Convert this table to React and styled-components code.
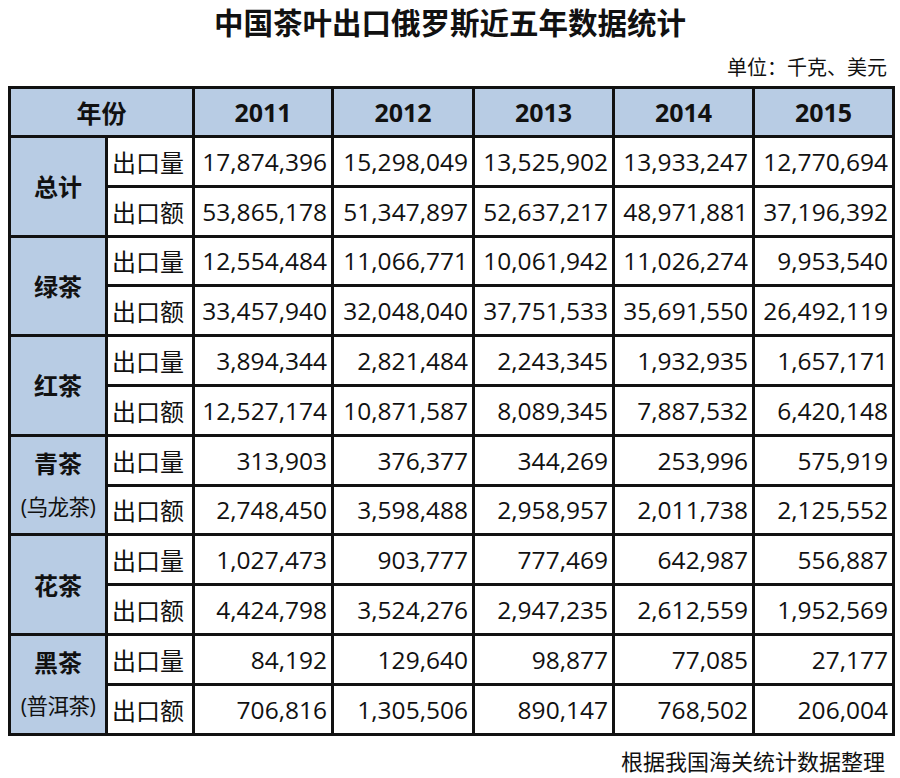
import React from "react";
import styled, { createGlobalStyle } from "styled-components";

const Global = createGlobalStyle`
  html, body { margin: 0; padding: 0; background: #fff; }
  body { font-family: "Open Sans", "Noto Sans CJK SC", sans-serif; color: #111; }
`;

const Page = styled.div`
  width: 900px;
  height: 778px;
  box-sizing: border-box;
  display: flex;
  flex-direction: column;
  overflow: hidden;
`;

const Title = styled.h1`
  margin: 0;
  height: 42px;
  line-height: 42px;
  text-align: center;
  font-family: "Noto Sans CJK SC", sans-serif;
  font-weight: 700;
  font-size: 29.5px;
  color: #111;
`;

const Unit = styled.div`
  margin-top: 11px;
  height: 28px;
  line-height: 28px;
  padding-right: 13px;
  text-align: right;
  font-family: "Noto Sans CJK SC", sans-serif;
  font-size: 20px;
`;

const Table = styled.table`
  margin: 5px 0 0 8px;
  width: 884px;
  table-layout: fixed;
  border-collapse: collapse;
  border: 3px solid #111;
  flex: none;
`;

const HeadRow = styled.tr`
  height: 49px;
`;

const BodyRow = styled.tr`
  height: 49.8px;
`;

const HeadCell = styled.th`
  border: 3px solid #111;
  background: #b8cce4;
  font-weight: 700;
  font-size: 25px;
  text-align: center;
  vertical-align: middle;
  padding: 0;
`;

const HeadLabel = styled.span`
  font-family: "Noto Sans CJK SC", sans-serif;
`;

const CategoryCell = styled.td`
  border: 3px solid #111;
  background: #b8cce4;
  text-align: center;
  vertical-align: middle;
  padding: 0;
`;

const CatName = styled.div`
  font-family: "Noto Sans CJK SC", sans-serif;
  font-weight: 700;
  font-size: 24px;
  line-height: 44px;
`;

const CatSub = styled.div`
  font-size: 21.5px;
  line-height: 44px;
  white-space: nowrap;
  letter-spacing: -0.5px;
`;

const MetricCell = styled.td`
  border: 3px solid #111;
  background: #fff;
  text-align: left;
  padding: 0 0 0 4px;
  font-family: "Noto Sans CJK SC", sans-serif;
  font-size: 24px;
  vertical-align: middle;
  white-space: nowrap;
`;

const ValueCell = styled.td`
  border: 3px solid #111;
  background: #fff;
  text-align: right;
  padding: 0 4px 0 0;
  font-size: 24.5px;
  vertical-align: middle;
  white-space: nowrap;
`;

const Footer = styled.div`
  margin-top: 9px;
  height: 30px;
  line-height: 30px;
  padding-right: 15px;
  text-align: right;
  font-family: "Noto Sans CJK SC", sans-serif;
  font-size: 22px;
  flex: none;
`;

const years = ["2011", "2012", "2013", "2014", "2015"];

const groups = [
  {
    name: "总计",
    qty: ["17,874,396", "15,298,049", "13,525,902", "13,933,247", "12,770,694"],
    amt: ["53,865,178", "51,347,897", "52,637,217", "48,971,881", "37,196,392"],
  },
  {
    name: "绿茶",
    qty: ["12,554,484", "11,066,771", "10,061,942", "11,026,274", "9,953,540"],
    amt: ["33,457,940", "32,048,040", "37,751,533", "35,691,550", "26,492,119"],
  },
  {
    name: "红茶",
    qty: ["3,894,344", "2,821,484", "2,243,345", "1,932,935", "1,657,171"],
    amt: ["12,527,174", "10,871,587", "8,089,345", "7,887,532", "6,420,148"],
  },
  {
    name: "青茶",
    sub: "(乌龙茶)",
    qty: ["313,903", "376,377", "344,269", "253,996", "575,919"],
    amt: ["2,748,450", "3,598,488", "2,958,957", "2,011,738", "2,125,552"],
  },
  {
    name: "花茶",
    qty: ["1,027,473", "903,777", "777,469", "642,987", "556,887"],
    amt: ["4,424,798", "3,524,276", "2,947,235", "2,612,559", "1,952,569"],
  },
  {
    name: "黑茶",
    sub: "(普洱茶)",
    qty: ["84,192", "129,640", "98,877", "77,085", "27,177"],
    amt: ["706,816", "1,305,506", "890,147", "768,502", "206,004"],
  },
];

const colWidths = [97, 87, 139, 141, 140, 140, 140];

export default function App() {
  return (
    <Page>
      <Global />
      <Title>中国茶叶出口俄罗斯近五年数据统计</Title>
      <Unit>单位：千克、美元</Unit>
      <Table>
        <colgroup>
          {colWidths.map((w, i) => (
            <col key={i} style={{ width: w }} />
          ))}
        </colgroup>
        <thead>
          <HeadRow>
            <HeadCell colSpan={2}>
              <HeadLabel>年份</HeadLabel>
            </HeadCell>
            {years.map((y) => (
              <HeadCell key={y}>{y}</HeadCell>
            ))}
          </HeadRow>
        </thead>
        <tbody>
          {groups.map((g) => (
            <React.Fragment key={g.name}>
              <BodyRow>
                <CategoryCell rowSpan={2}>
                  <CatName>{g.name}</CatName>
                  {g.sub && <CatSub>{g.sub}</CatSub>}
                </CategoryCell>
                <MetricCell>出口量</MetricCell>
                {g.qty.map((v, i) => (
                  <ValueCell key={i}>{v}</ValueCell>
                ))}
              </BodyRow>
              <BodyRow>
                <MetricCell>出口额</MetricCell>
                {g.amt.map((v, i) => (
                  <ValueCell key={i}>{v}</ValueCell>
                ))}
              </BodyRow>
            </React.Fragment>
          ))}
        </tbody>
      </Table>
      <Footer>根据我国海关统计数据整理</Footer>
    </Page>
  );
}
